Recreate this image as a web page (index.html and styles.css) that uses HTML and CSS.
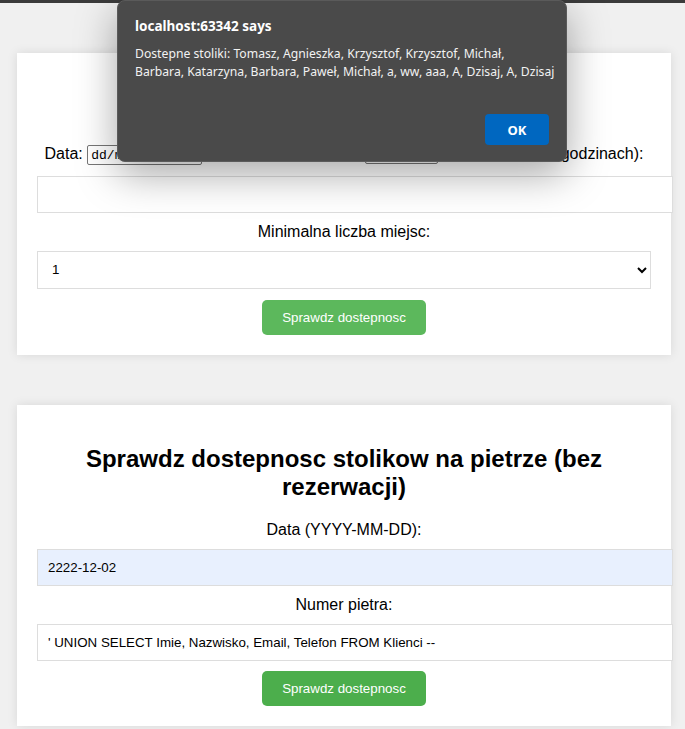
FILE: index.html
```html
<!DOCTYPE html>
<html lang="pl">
<head>
<meta charset="utf-8">
<title>Stoliki</title>
<link rel="stylesheet" href="styles.css">
</head>
<body>
<div class="topbar"></div>
<main class="page">
  <section class="card">
    <h2>Sprawdz dostepnosc stolikow</h2>
    <div class="row">Data: <input class="date" type="text" value="dd/mm/yyyy"> Godzina rozpoczecia: <input class="time" type="text" value="--:--"> Czas trwania (w godzinach):</div>
    <input class="field" type="text" value="">
    <label class="lbl">Minimalna liczba miejsc:</label>
    <select class="field sel"><option>1</option></select>
    <button class="btn">Sprawdz dostepnosc</button>
  </section>

  <section class="card">
    <h2>Sprawdz dostepnosc stolikow na pietrze (bez rezerwacji)</h2>
    <label class="lbl">Data (YYYY-MM-DD):</label>
    <input class="field filled" type="text" value="2222-12-02">
    <label class="lbl">Numer pietra:</label>
    <input class="field" type="text" value="' UNION SELECT Imie, Nazwisko, Email, Telefon FROM Klienci --">
    <button class="btn btn-dark">Sprawdz dostepnosc</button>
  </section>
</main>

<div class="dialog">
  <div class="dlg-title">localhost:63342 says</div>
  <div class="dlg-msg">Dostepne stoliki: Tomasz, Agnieszka, Krzysztof, Krzysztof, Michał,<br>Barbara, Katarzyna, Barbara, Paweł, Michał, a, ww, aaa, A, Dzisaj, A, Dzisaj</div>
  <div class="dlg-actions"><button class="dlg-ok">OK</button></div>
</div>
</body>
</html>
```

FILE: styles.css
```css
html, body {
  margin: 0;
  padding: 0;
}
body {
  background: #f0f0f0;
  font-family: "Liberation Sans", Arial, sans-serif;
  font-size: 16px;
  color: #000;
  overflow: hidden;
  height: 729px;
}
.topbar {
  height: 3px;
  background: #3b3b3b;
}
.page {
  padding: 50px 14px 0 17px;
}
.card {
  background: #fff;
  padding: 20px;
  margin-bottom: 50px;
  text-align: center;
  box-shadow: 0 0 10px rgba(0, 0, 0, 0.1);
}
.card h2 {
  font-size: 24px;
  font-weight: bold;
  margin: 19.92px 0;
  line-height: normal;
}
.row {
  margin-bottom: 10px;
  white-space: nowrap;
  line-height: 25px;
}
.date, .time {
  box-sizing: border-box;
  height: 20px;
  border: 1px solid #767676;
  border-radius: 2px;
  padding: 1px 3px;
  font-size: 13px;
  vertical-align: baseline;
}
.date {
  width: 115px;
  font-family: "Liberation Mono", monospace;
}
.time {
  width: 73px;
  font-family: "Liberation Sans", Arial, sans-serif;
}
.lbl {
  display: block;
  margin: 0 0 10px;
}
.field {
  display: block;
  width: 100%;
  padding: 10px;
  margin: 0 0 10px;
  border: 1px solid #ddd;
  font-family: "Liberation Sans", Arial, sans-serif;
  font-size: 13.333px;
  background: #fff;
  color: #000;
}
.filled {
  background: #e8f0fe;
}
.sel {
  box-sizing: border-box;
  height: 38px;
  padding: 0 6px 0 10px;
  margin-bottom: 11px;
}
.btn {
  display: inline-block;
  background: #5cb85c;
  color: #fff;
  border: none;
  border-radius: 5px;
  padding: 10px 20px;
  font-family: "Liberation Sans", Arial, sans-serif;
  font-size: 13.333px;
  line-height: 15px;
}
.btn-dark {
  background: #4cae4c;
}
.dialog {
  position: absolute;
  left: 117px;
  top: 0;
  width: 450px;
  height: 162px;
  box-sizing: border-box;
  background: #4a4a4a;
  border: 1px solid #5a5a5a;
  border-radius: 8px;
  box-shadow: 0 12px 40px rgba(0, 0, 0, 0.35);
  padding: 16px 17px 0;
  font-family: "Noto Sans", "Open Sans", sans-serif;
  color: #fff;
}
.dlg-title {
  font-weight: bold;
  font-size: 13.5px;
  line-height: 18px;
}
.dlg-msg {
  margin-top: 10px;
  font-size: 12.2px;
  line-height: 18px;
  white-space: nowrap;
  color: #f2f2f2;
}
.dlg-actions {
  display: flex;
  justify-content: flex-end;
  margin-top: 33px;
}
.dlg-ok {
  width: 64px;
  height: 31px;
  background: #0067c0;
  color: #fff;
  border: none;
  border-radius: 4px;
  font-family: "Noto Sans", "Open Sans", sans-serif;
  font-weight: bold;
  font-size: 13px;
}
```
